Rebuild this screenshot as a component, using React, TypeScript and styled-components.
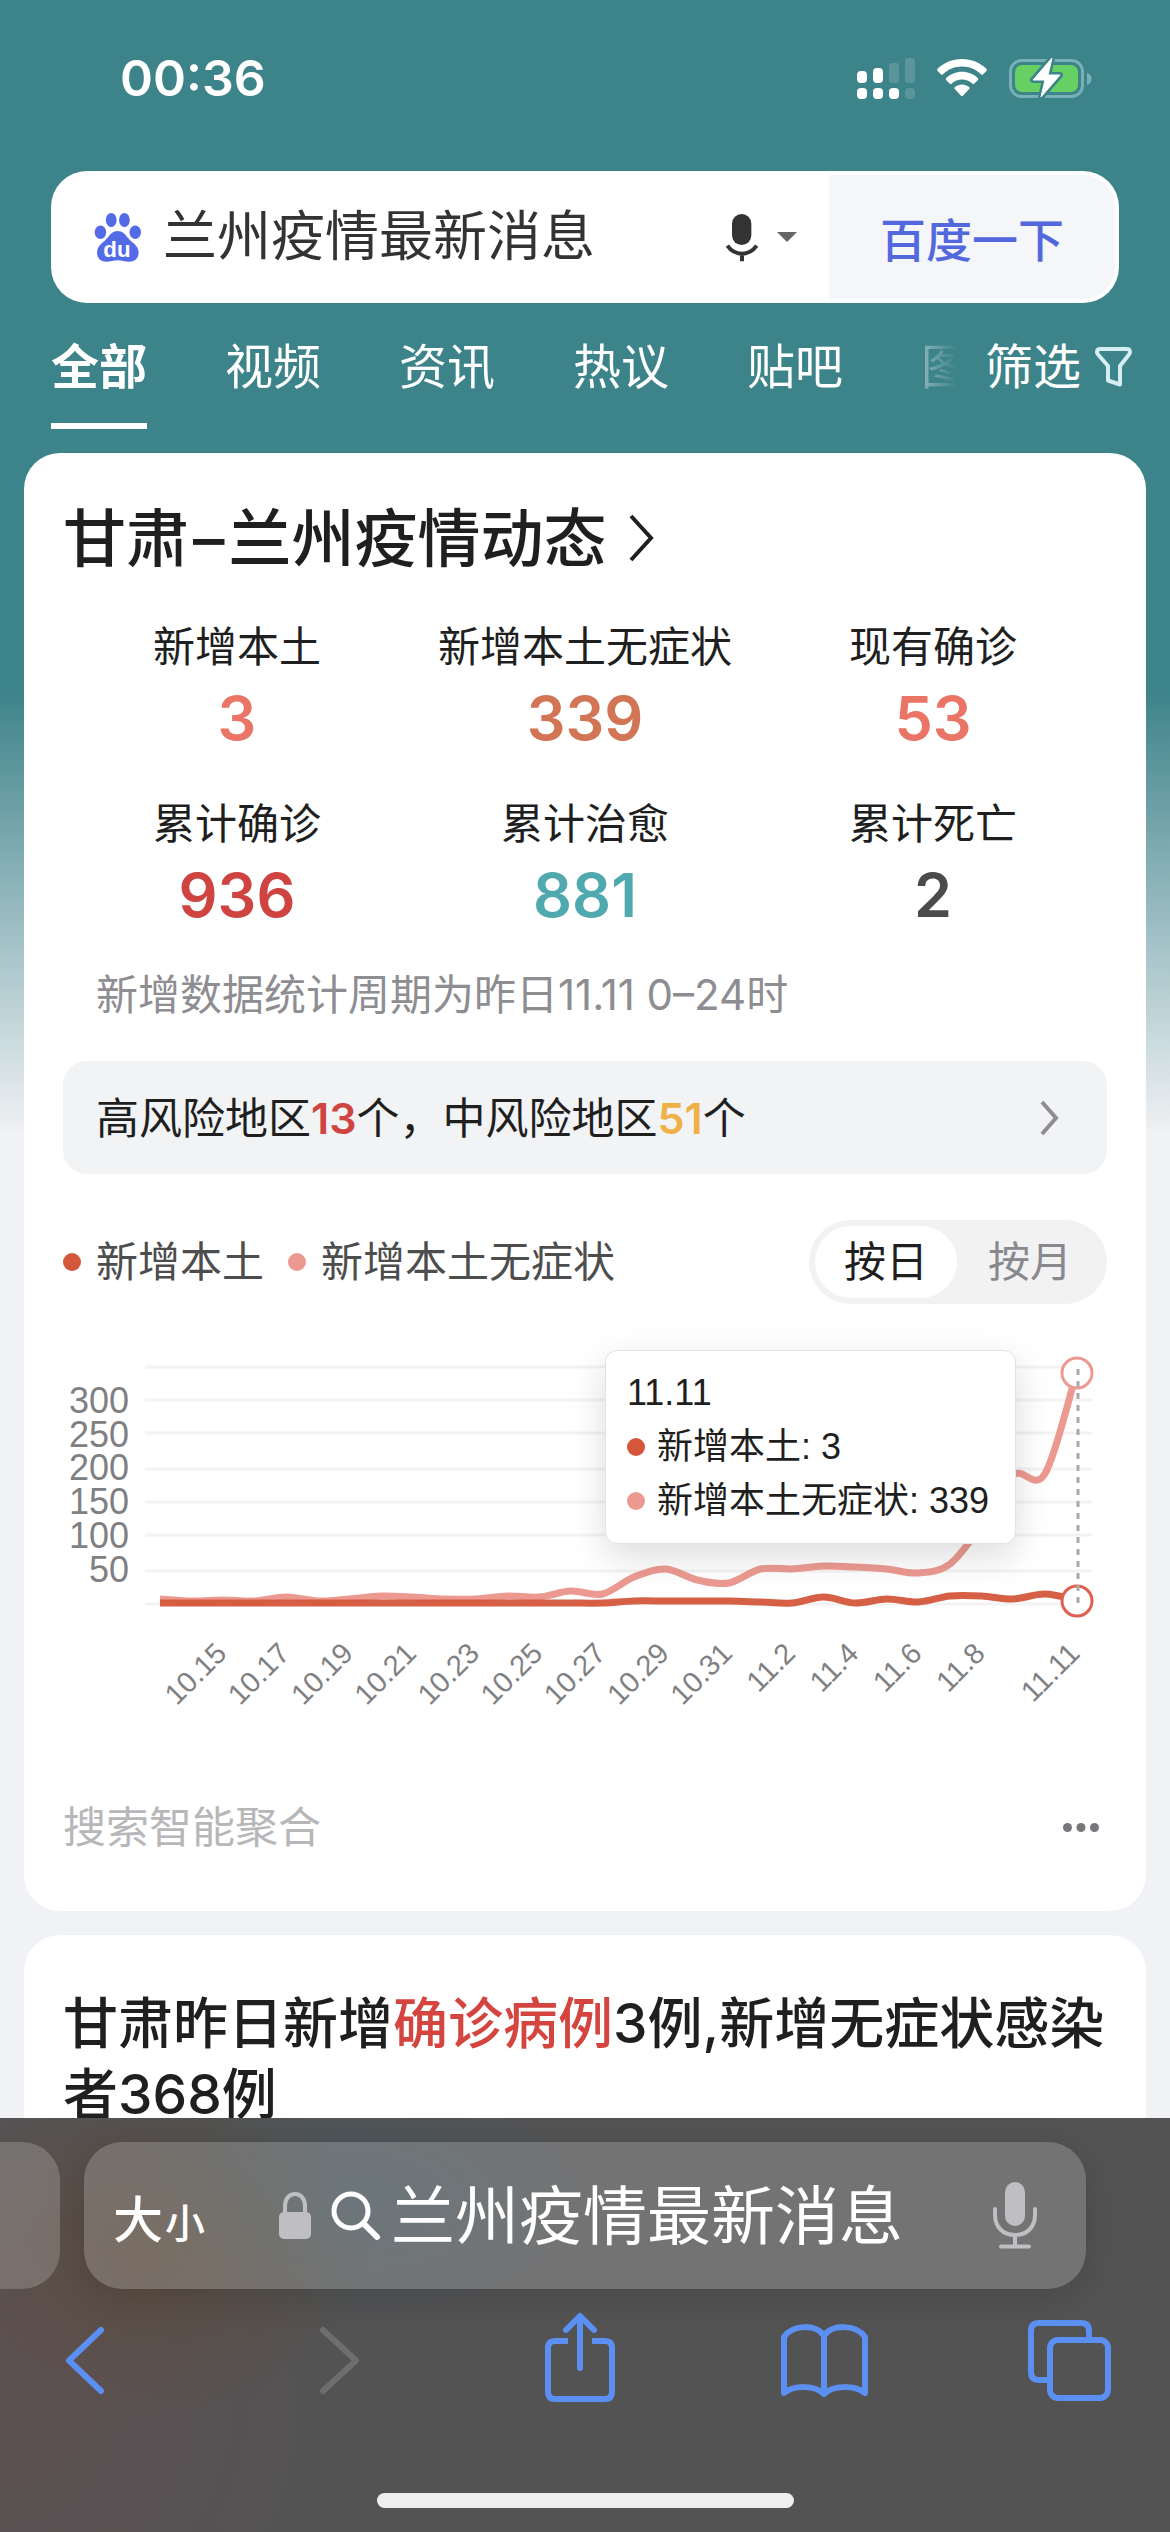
import React, { useState } from "react";
import styled, { createGlobalStyle } from "styled-components";

const GlobalStyle = createGlobalStyle`
  * { box-sizing: border-box; }
  body {
    margin: 0;
    background: #f1f2f5;
    color: #1f1f1f;
    font-family: Inter, "Noto Sans CJK SC", sans-serif;
  }
  button, input { font: inherit; color: inherit; border: 0; background: none; padding: 0; margin: 0; }
  button { cursor: pointer; }
  a { color: inherit; text-decoration: none; }
  svg { display: block; flex: none; overflow: visible; }
`;

const Screen = styled.div`
  height: 100vh;
  display: flex;
  flex-direction: column;
`;

const Page = styled.main`
  flex: 1;
  min-height: 0;
  overflow-y: auto;
  scrollbar-width: none;
  background: linear-gradient(#3d838a 0, #3d838a 690px, #f1f2f5 1136px);
`;

const StatusBar = styled.div`
  display: flex;
  align-items: center;
  padding: 48px 78px 0 120px;
  color: #fff;
`;

const Clock = styled.time`
  flex: 1;
  font-size: 50px;
  line-height: 60px;
  font-weight: 600;
`;

const StatusIcons = styled.div`
  display: flex;
  align-items: center;
  gap: 22px;
`;

const SearchForm = styled.form`
  display: flex;
  align-items: center;
  height: 132px;
  margin: 63px 51px 0;
  padding: 4px 4px 4px 44px;
  border-radius: 36px;
  background: #fff;
`;

const SearchInput = styled.input`
  flex: 1;
  min-width: 0;
  margin: 0 22px;
  font-size: 54px;
  line-height: 80px;
  color: #333;
  outline: 0;
`;

const VoiceButton = styled.button`
  display: flex;
  align-items: center;
  gap: 18px;
  margin-right: 32px;
`;

const SubmitButton = styled.button`
  align-self: stretch;
  width: 286px;
  border-radius: 0 32px 32px 0;
  background: #f5f6fa;
  color: #5468dd;
  font-size: 46px;
  font-weight: 500;
`;

const TabBar = styled.nav`
  display: flex;
  align-items: flex-start;
  margin-top: 34px;
  padding: 0 38px 0 51px;
  color: #fff;
  font-size: 48px;
  line-height: 60px;
`;

const TabStrip = styled.div`
  flex: 1;
  min-width: 0;
  display: flex;
  gap: 78px;
  overflow: hidden;
  mask-image: linear-gradient(to right, #000 calc(100% - 90px), rgba(0, 0, 0, 0.4) calc(100% - 36px), transparent);
`;

const Tab = styled.a<{ $active?: boolean }>`
  flex: none;
  padding-bottom: 26px;
  border-bottom: 6px solid ${(p) => (p.$active ? "#fff" : "transparent")};
  font-weight: ${(p) => (p.$active ? 700 : 400)};
`;

const FilterButton = styled.button`
  display: flex;
  align-items: center;
  gap: 14px;
  margin-left: 28px;
`;

const Card = styled.section`
  margin: 24px 24px 0;
  padding: 0 39px;
  border-radius: 36px;
  background: #fff;
`;

const TopicTitle = styled.h2`
  margin: 0;
  padding-top: 43px;
  font-size: 63px;
  line-height: 84px;
  font-weight: 500;
  a {
    display: flex;
    align-items: center;
    gap: 22px;
  }
`;

const Dash = styled.span`
  margin: 0 4px;
`;

const Stats = styled.dl`
  display: grid;
  grid-template-columns: repeat(3, 1fr);
  row-gap: 35px;
  margin: 37px 0 0;
  text-align: center;
`;

const StatLabel = styled.dt`
  font-size: 42px;
  line-height: 60px;
`;

const StatValue = styled.dd<{ $color: string }>`
  margin: 0;
  font-size: 61px;
  line-height: 82px;
  font-weight: 600;
  color: ${(p) => p.$color};
`;

const Note = styled.p`
  margin: 29px 0 0;
  padding-left: 33px;
  font-size: 42px;
  line-height: 60px;
  color: #8d8d92;
`;

const RiskLink = styled.a`
  display: flex;
  align-items: center;
  justify-content: space-between;
  height: 113px;
  margin-top: 36px;
  padding: 0 48px 0 33px;
  border-radius: 24px;
  background: #f2f3f5;
  font-size: 43px;
  line-height: 60px;
`;

const RiskCount = styled.b<{ $color: string }>`
  font-weight: 600;
  color: ${(p) => p.$color};
`;

const ChartHead = styled.div`
  display: flex;
  align-items: center;
  justify-content: space-between;
  margin-top: 46px;
`;

const Legend = styled.div`
  display: flex;
  gap: 24px;
  font-size: 42px;
  line-height: 60px;
  color: #4d4d4d;
`;

const LegendItem = styled.span`
  display: flex;
  align-items: center;
  gap: 15px;
`;

const Dot = styled.i<{ $color: string }>`
  width: 18px;
  height: 18px;
  border-radius: 50%;
  background: ${(p) => p.$color};
`;

const Segmented = styled.div`
  display: flex;
  gap: 2px;
  height: 84px;
  padding: 6px;
  border-radius: 42px;
  background: #f2f2f3;
`;

const Segment = styled.button<{ $active: boolean }>`
  width: 142px;
  border-radius: 36px;
  font-size: 42px;
  line-height: 60px;
  background: ${(p) => (p.$active ? "#fff" : "transparent")};
  color: ${(p) => (p.$active ? "#1f1f1f" : "#88888d")};
`;

const ChartBox = styled.div`
  position: relative;
  margin-top: 36px;
`;

const ChartSvg = styled.svg`
  width: 100%;
  height: auto;
  font-family: "Liberation Sans", Arial, sans-serif;
  fill: #808083;
`;

const Tooltip = styled.div`
  position: absolute;
  top: 10px;
  right: 91px;
  padding: 15px 26px 15px 21px;
  border: 1px solid #e2e2e4;
  border-radius: 12px;
  background: #fff;
  box-shadow: 0 12px 36px rgba(0, 0, 0, 0.14);
  font-family: "Liberation Sans", "Noto Sans CJK SC", sans-serif;
  font-size: 36px;
  line-height: 54px;
`;

const TooltipRow = styled.div`
  display: flex;
  align-items: center;
  gap: 12px;
`;

const CardFoot = styled.footer`
  display: flex;
  align-items: center;
  justify-content: space-between;
  margin-top: 57px;
  padding: 0 8px 54px 0;
  font-size: 43px;
  line-height: 60px;
  color: #b7b7b9;
`;

const ResultTitle = styled.h3`
  margin: 0;
  padding: 53px 0 60px;
  font-size: 55px;
  line-height: 71px;
  font-weight: 500;
  em {
    font-style: normal;
    color: #d5453f;
  }
`;

const BrowserBar = styled.footer`
  background:
    radial-gradient(ellipse 220px 170px at 150px 130px, rgba(98, 66, 28, 0.36), transparent),
    radial-gradient(ellipse 240px 120px at 350px 80px, rgba(66, 92, 102, 0.5), transparent),
    radial-gradient(ellipse 340px 340px at 0 280px, rgba(104, 78, 80, 0.5), transparent),
    #535354;
`;

const AddressRow = styled.div`
  display: flex;
  gap: 24px;
  padding: 24px 84px 0 0;
`;

const NeighbourTab = styled.div`
  width: 60px;
  border-radius: 0 38px 38px 0;
  background: rgba(255, 255, 255, 0.19);
`;

const AddressBar = styled.div`
  flex: 1;
  display: flex;
  align-items: center;
  justify-content: space-between;
  height: 147px;
  padding: 0 41px 0 29px;
  border-radius: 38px;
  background: rgba(255, 255, 255, 0.19);
  box-shadow: 0 8px 36px rgba(0, 0, 0, 0.14);
  color: #fff;
`;

const TextSizeButton = styled.button`
  display: flex;
  align-items: baseline;
  gap: 2px;
  font-size: 50px;
  font-weight: 500;
  small {
    font-size: 40px;
  }
`;

const AddressLabel = styled.label`
  display: flex;
  align-items: center;
  gap: 10px;
`;

const LockIcon = styled.svg`
  margin-right: 10px;
`;

const AddressInput = styled.input`
  width: 520px;
  font-size: 64px;
  line-height: 90px;
  outline: 0;
`;

const MicButton = styled.button`
  width: 60px;
  display: flex;
  justify-content: center;
`;

const Toolbar = styled.div`
  display: flex;
  justify-content: space-between;
  margin-top: 21px;
  padding: 0 57px 0 41px;
`;

const ToolButton = styled.button`
  color: #5b90f2;
  &:disabled {
    color: #6e6e70;
  }
`;

const HomeIndicator = styled.div`
  width: 417px;
  height: 15px;
  margin: 87px auto 0;
  border-radius: 8px;
  background: #eee;
`;

const HomeArea = styled.div`
  padding-bottom: 24px;
`;

const tabs = ["全部", "视频", "资讯", "热议", "贴吧", "图"];

const stats = [
  { label: "新增本土", value: "3", color: "#ea7465" },
  { label: "新增本土无症状", value: "339", color: "#d17554" },
  { label: "现有确诊", value: "53", color: "#ea7465" },
  { label: "累计确诊", value: "936", color: "#cf4440" },
  { label: "累计治愈", value: "881", color: "#50a9ae" },
  { label: "累计死亡", value: "2", color: "#4b4b4d" },
];

const RED = "#d4573c";
const PINK = "#ec9a91";

/* Plot geometry, in chart units */
const X0 = 97;
const STEP = 31.6;
const gridLines = [27, 60, 93, 129, 162, 195, 231, 264];
const yLabels = [
  ["300", 60],
  ["250", 94],
  ["200", 127],
  ["150", 161],
  ["100", 195],
  ["50", 229],
] as const;
const xLabels = [
  ["10.15", 2], ["10.17", 4], ["10.19", 6], ["10.21", 8], ["10.23", 10],
  ["10.25", 12], ["10.27", 14], ["10.29", 16], ["10.31", 18], ["11.2", 20],
  ["11.4", 22], ["11.6", 24], ["11.8", 26], ["11.11", 29],
] as const;

const asymptomatic = [
  259, 261, 260, 261, 257, 261, 259, 256, 257, 259, 259, 256, 257, 251, 254,
  237, 229, 240, 243, 229, 229, 226, 227, 229, 233, 224, 185, 135, 134, 33,
];
const confirmed = [
  263, 263, 263, 263, 263, 263, 263, 263, 263, 263, 263, 263, 263, 263, 263,
  261, 261, 261, 261, 262, 263, 257, 263, 259, 262, 256, 256, 259, 254, 260,
];

function smoothPath(ys: number[]) {
  const pts = ys.map((y, i) => [X0 + i * STEP, y]);
  let d = `M${pts[0][0]} ${pts[0][1]}`;
  for (let i = 0; i < pts.length - 1; i++) {
    const p0 = pts[Math.max(i - 1, 0)];
    const p1 = pts[i];
    const p2 = pts[i + 1];
    const p3 = pts[Math.min(i + 2, pts.length - 1)];
    d += ` C${p1[0] + (p2[0] - p0[0]) / 6} ${p1[1] + (p2[1] - p0[1]) / 6} ${p2[0] - (p3[0] - p1[0]) / 6} ${p2[1] - (p3[1] - p1[1]) / 6} ${p2[0]} ${p2[1]}`;
  }
  return d;
}

function TrendChart() {
  return (
    <ChartSvg viewBox="0 0 1044 400" role="img" aria-label="疫情趋势">
      {gridLines.map((y) => (
        <line key={y} x1="82" x2="1029" y1={y} y2={y} stroke="#f3f3f4" strokeWidth="3" />
      ))}
      {yLabels.map(([t, y]) => (
        <text key={t} x="66" y={y + 13} textAnchor="end" fontSize="36">{t}</text>
      ))}
      {xLabels.map(([t, i]) => {
        const x = X0 + i * STEP + 5;
        return (
          <text key={t} x={x} y="315" textAnchor="end" fontSize="29" transform={`rotate(-45 ${x} 315)`}>{t}</text>
        );
      })}
      <path d={smoothPath(asymptomatic)} fill="none" stroke={PINK} strokeWidth="7" />
      <path d={smoothPath(confirmed)} fill="none" stroke={RED} strokeWidth="7" strokeOpacity="0.95" />
      <circle cx="1014" cy="33" r="15" fill="#fff" stroke={PINK} strokeWidth="3" />
      <circle cx="1014" cy="261" r="15" fill="#fff" stroke="#e0604f" strokeWidth="3" />
      <line x1="1015" x2="1015" y1="29" y2="264" stroke="#a9a9ad" strokeWidth="3" strokeDasharray="6 6" />
    </ChartSvg>
  );
}

function SignalIcon() {
  return (
    <svg width="58" height="41" viewBox="0 0 58 41" fill="#fff">
      <rect x="0" y="13" width="10" height="12" rx="4" />
      <rect x="16" y="10" width="10" height="15" rx="4" />
      <rect x="32" y="5" width="10" height="20" rx="3" opacity=".15" />
      <rect x="48" y="0" width="10" height="25" rx="3" opacity=".15" />
      <rect x="0" y="30" width="10" height="11" rx="4" />
      <rect x="16" y="30" width="10" height="11" rx="4" />
      <rect x="32" y="30" width="10" height="11" rx="4" />
      <rect x="48" y="30" width="10" height="11" rx="4" opacity=".15" />
    </svg>
  );
}

function WifiIcon() {
  return (
    <svg width="50" height="38" viewBox="0 0 50 38" fill="#fff">
      <path d="M25 0C15.500 0 7 3.600.6 9.800a1.600 1.600 0 0 0 0 2.200l3.200 3.300a1.600 1.600 0 0 0 2.200 0C11.200 10.300 17.700 7.600 25 7.600s13.800 2.700 19 7.700a1.600 1.600 0 0 0 2.200 0l3.200-3.300a1.600 1.600 0 0 0 0-2.200C43 3.600 34.500 0 25 0z" />
      <path d="M25 12.800c-6 0-11.500 2.300-15.700 6.200a1.600 1.600 0 0 0 0 2.300l3.300 3.300a1.600 1.600 0 0 0 2.200 0c2.800-2.600 6.300-4 10.200-4s7.400 1.400 10.200 4a1.600 1.600 0 0 0 2.200 0l3.300-3.300a1.600 1.600 0 0 0 0-2.300C36.500 15.100 31 12.800 25 12.800z" />
      <path d="M25 25.500c-2.600 0-5 .9-7 2.400-.8.600-.8 1.500-.2 2.200l6 6.400c.7.700 1.700.7 2.400 0l6-6.400c.6-.7.6-1.600-.2-2.200-2-1.500-4.400-2.400-7-2.400z" />
    </svg>
  );
}

function BatteryIcon() {
  return (
    <svg width="83" height="40" viewBox="0 0 83 40">
      <rect x="1.500" y="2.500" width="72" height="36" rx="11" fill="none" stroke="#77b0b6" strokeWidth="3" />
      <rect x="6" y="7" width="63" height="27" rx="7" fill="#66d063" />
      <path d="M78 15c3 1 4.500 3 4.500 6s-1.500 5-4.500 6z" fill="#77b0b6" />
      <path d="M43 0 24 22h12l-4 17 19-22H39z" fill="#fff" stroke="#3d838a" strokeWidth="6" strokeLinejoin="round" />
      <path d="M43 0 24 22h12l-4 17 19-22H39z" fill="#fff" stroke="#fff" strokeWidth="1" strokeLinejoin="round" />
    </svg>
  );
}

function PawLogo() {
  return (
    <svg width="46" height="49" viewBox="135 69 136 145" fill="#546be8" role="img" aria-label="百度">
      <ellipse cx="183" cy="90" rx="16" ry="21" />
      <ellipse cx="222" cy="90" rx="16" ry="21" />
      <ellipse cx="151" cy="126" rx="17" ry="20" />
      <ellipse cx="254" cy="126" rx="17" ry="20" />
      <path d="M202 122c-14 0-22 9-30 20-10 13-31 22-31 44 0 17 11 27 27 27 12 0 22-4 34-4s22 4 34 4c17 0 28-10 28-27 0-22-22-31-32-44-8-11-16-20-30-20z" />
      <text x="200" y="198" textAnchor="middle" fontFamily="Liberation Sans, sans-serif" fontWeight="700" fontSize="66" fill="#fff">du</text>
    </svg>
  );
}

function Tool({ label, disabled, children }: { label: string; disabled?: boolean; children: React.ReactNode }) {
  return (
    <ToolButton type="button" aria-label={label} disabled={disabled}>
      <svg width="88" height="96" viewBox="0 0 88 96" fill="none" stroke="currentColor" strokeWidth="6" strokeLinecap="round" strokeLinejoin="round">
        {children}
      </svg>
    </ToolButton>
  );
}

export default function App() {
  const [mode, setMode] = useState("按日");
  return (
    <Screen>
      <GlobalStyle />
      <Page>
        <StatusBar>
          <Clock>00:36</Clock>
          <StatusIcons>
            <SignalIcon />
            <WifiIcon />
            <BatteryIcon />
          </StatusIcons>
        </StatusBar>

        <SearchForm onSubmit={(e) => e.preventDefault()}>
          <PawLogo />
          <SearchInput aria-label="搜索" defaultValue="兰州疫情最新消息" />
          <VoiceButton type="button" aria-label="语音搜索">
            <svg width="34" height="49" viewBox="77 72 102 147">
              <rect x="98" y="75" width="58" height="93" rx="29" fill="#333" />
              <path d="M84 170q17 24 44 24t44-24M128 194v23" fill="none" stroke="#333" strokeWidth="12" />
            </svg>
            <svg width="20" height="10" viewBox="0 0 20 10">
              <path d="M0 0h20L10 10z" fill="#666" />
            </svg>
          </VoiceButton>
          <SubmitButton type="submit">百度一下</SubmitButton>
        </SearchForm>

        <TabBar>
          <TabStrip>
            {tabs.map((t, i) => (
              <Tab key={t} href="#" $active={i === 0}>{t}</Tab>
            ))}
          </TabStrip>
          <FilterButton type="button">
            筛选
            <svg width="37" height="40" viewBox="0 0 37 40" fill="none" stroke="#d4eef3" strokeWidth="4" strokeLinejoin="round">
              <path d="M5 2h27c3 0 4 3 2 5.500L25 19v18.500l-12-4V19L3 7.500C1 5 2 2 5 2z" />
            </svg>
          </FilterButton>
        </TabBar>

        <Card>
          <TopicTitle>
            <a href="#">
              <span>甘肃<Dash>–</Dash>兰州疫情动态</span>
              <svg width="26" height="46" viewBox="0 0 26 46" fill="none" stroke="#1f1f1f" strokeWidth="4">
                <path d="m2 1 20 22L2 45" />
              </svg>
            </a>
          </TopicTitle>
          <Stats>
            {stats.map((s) => (
              <div key={s.label}>
                <StatLabel>{s.label}</StatLabel>
                <StatValue $color={s.color}>{s.value}</StatValue>
              </div>
            ))}
          </Stats>
          <Note>新增数据统计周期为昨日11.11 0–24时</Note>
          <RiskLink href="#">
            <span>
              高风险地区<RiskCount $color="#cf4440">13</RiskCount>个，中风险地区<RiskCount $color="#f0b048">51</RiskCount>个
            </span>
            <svg width="18" height="34" viewBox="0 0 18 34" fill="none" stroke="#8d8d92" strokeWidth="4">
              <path d="m1 1 14 16L1 33" />
            </svg>
          </RiskLink>

          <ChartHead>
            <Legend>
              <LegendItem><Dot $color={RED} />新增本土</LegendItem>
              <LegendItem><Dot $color={PINK} />新增本土无症状</LegendItem>
            </Legend>
            <Segmented>
              {["按日", "按月"].map((m) => (
                <Segment key={m} type="button" $active={m === mode} aria-pressed={m === mode} onClick={() => setMode(m)}>{m}</Segment>
              ))}
            </Segmented>
          </ChartHead>

          <ChartBox>
            <TrendChart />
            <Tooltip>
              <div>11.11</div>
              <TooltipRow><Dot $color={RED} />新增本土: 3</TooltipRow>
              <TooltipRow><Dot $color={PINK} />新增本土无症状: 339</TooltipRow>
            </Tooltip>
          </ChartBox>

          <CardFoot>
            搜索智能聚合
            <button type="button" aria-label="更多">
              <svg width="36" height="9" viewBox="0 0 36 9" fill="#77777b">
                <circle cx="4.500" cy="4.500" r="4.500" />
                <circle cx="18" cy="4.500" r="4.500" />
                <circle cx="31.500" cy="4.500" r="4.500" />
              </svg>
            </button>
          </CardFoot>
        </Card>

        <Card>
          <ResultTitle>
            <a href="#">甘肃昨日新增<em>确诊病例</em>3例,新增无症状感染者368例</a>
          </ResultTitle>
        </Card>
      </Page>

      <BrowserBar>
        <AddressRow>
          <NeighbourTab />
          <AddressBar>
            <TextSizeButton type="button">大<small>小</small></TextSizeButton>
            <AddressLabel>
              <LockIcon width="32" height="47" viewBox="0 0 32 47">
                <rect x="0" y="20" width="32" height="27" rx="5" fill="#bfbfc3" />
                <path d="M6 22V14C6 7 10 2 16 2s10 5 10 12v8" fill="none" stroke="#bfbfc3" strokeWidth="4" />
              </LockIcon>
              <svg width="50" height="50" viewBox="0 0 50 50" fill="none" stroke="#fff" strokeWidth="5" strokeLinecap="round">
                <circle cx="20" cy="20" r="17" />
                <path d="m33 33 13 13" strokeWidth="6" />
              </svg>
              <AddressInput aria-label="地址" defaultValue="兰州疫情最新消息" />
            </AddressLabel>
            <MicButton type="button" aria-label="听写">
              <svg width="44" height="67" viewBox="0 0 44 67" fill="none" stroke="#bfbfc3" strokeWidth="4" strokeLinecap="round">
                <rect x="12" y="0" width="20" height="44" rx="10" fill="#bfbfc3" stroke="none" />
                <path d="M2 27v6c0 12 8 20 20 20s20-8 20-20v-6M22 53v11M8 64.500h28" />
              </svg>
            </MicButton>
          </AddressBar>
        </AddressRow>
        <Toolbar>
          <Tool label="后退"><path d="M60 20 28 50.500 60 81" /></Tool>
          <Tool label="前进" disabled><path d="m36 20 33 30.500L36 81" /></Tool>
          <Tool label="共享">
            <path d="M35 31H22q-7 0-7 7v44q0 7 7 7h50q7 0 7-7V38q0-7-7-7H59" strokeLinecap="butt" />
            <path d="M47 58V7M33 20 47 6l14 14" />
          </Tool>
          <Tool label="书签">
            <path d="M45 26C38 14 14 14 5 27v56c10-8 31-8 40 1 9-9 30-9 41-1V27C77 14 52 14 45 26zM45 26v58" />
          </Tool>
          <Tool label="标签页">
            <rect x="25" y="30" width="58" height="58" rx="8" />
            <path d="M64 29v-8q0-8-8-8H14q-8 0-8 8v41q0 8 8 8h10" strokeLinecap="butt" />
          </Tool>
        </Toolbar>
        <HomeArea>
          <HomeIndicator />
        </HomeArea>
      </BrowserBar>
    </Screen>
  );
}
